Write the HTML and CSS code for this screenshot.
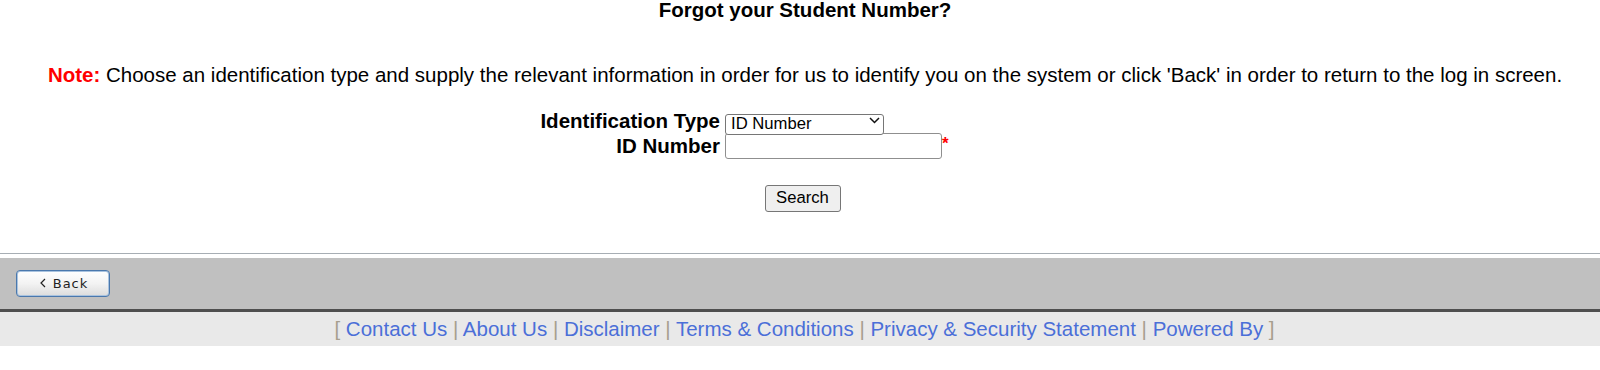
FILE: index.html
```html
<!DOCTYPE html>
<html lang="en">
<head>
<meta charset="utf-8">
<title>Forgot your Student Number?</title>
<link rel="stylesheet" href="styles.css">
</head>
<body>
<div class="main">
  <h1 class="title">Forgot your Student Number?</h1>
  <p class="note"><span class="note-label">Note:</span> Choose an identification type and supply the relevant information in order for us to identify you on the system or click 'Back' in order to return to the log in screen.</p>
  <div class="form-grid">
    <label class="form-label" for="idtype">Identification Type</label>
    <div class="form-field">
      <div class="select-wrap">
        <select id="idtype" class="select">
          <option>ID Number</option>
          <option>Passport Number</option>
        </select>
        <svg class="select-arrow" width="11" height="7" viewBox="0 0 11 7"><polyline points="1,1 5.5,5.5 10,1" fill="none" stroke="#111" stroke-width="1.5"/></svg>
      </div>
    </div>
    <label class="form-label" for="idnum">ID Number</label>
    <div class="form-field">
      <input id="idnum" class="text-input" type="text"><span class="required">*</span>
    </div>
  </div>
  <div class="actions">
    <button class="search-btn" type="button">Search</button>
  </div>
</div>
<div class="divider"></div>
<div class="toolbar">
  <button class="back-btn" type="button">
    <svg class="chev" width="6" height="10" viewBox="0 0 6 10"><polyline points="5,1 1,5 5,9" fill="none" stroke="#222" stroke-width="1.2"/></svg>
    <span class="back-text">Back</span>
  </button>
</div>
<div class="footer">
  <span class="sep">[</span> <a href="#">Contact Us</a> <span class="sep">|</span> <a href="#">About Us</a> <span class="sep">|</span> <a href="#">Disclaimer</a> <span class="sep">|</span> <a href="#">Terms &amp; Conditions</a> <span class="sep">|</span> <a href="#">Privacy &amp; Security Statement</a> <span class="sep">|</span> <a href="#">Powered By</a> <span class="sep">]</span>
</div>
</body>
</html>
```

FILE: styles.css
```css
html, body {
  margin: 0;
  padding: 0;
  background: #ffffff;
}
body {
  font-family: "Liberation Sans", Arial, sans-serif;
  font-size: 20.5px;
  color: #000;
}
.main {
  text-align: center;
  padding-left: 10px;
}
.title {
  margin: 0;
  font-size: 20.5px;
  line-height: 20px;
  font-weight: bold;
}
.note {
  margin: 43px 0 0;
  font-size: 20.5px;
  line-height: 23px;
}
.note-label {
  color: #ff0000;
  font-weight: bold;
}
.form-grid {
  display: grid;
  grid-template-columns: 710px auto;
  grid-template-rows: 21px 26px;
  column-gap: 5px;
  row-gap: 2px;
  align-items: center;
  margin-top: 24px;
  text-align: left;
}
.form-label {
  font-weight: bold;
  font-size: 20.5px;
  line-height: 20px;
  text-align: right;
}
.form-field {
  display: flex;
  align-items: flex-start;
  height: 100%;
}
.select-wrap {
  position: relative;
  width: 159px;
  height: 21px;
}
.select {
  -webkit-appearance: none;
  appearance: none;
  box-sizing: border-box;
  width: 159px;
  height: 21px;
  margin: 0;
  padding: 0 0 2px 5px;
  font-family: Arial, "Liberation Sans", sans-serif;
  font-size: 16.67px;
  line-height: 17px;
  color: #000;
  background: #ffffff;
  border: 1px solid #767676;
  border-radius: 3px;
}
.select-arrow {
  position: absolute;
  right: 4px;
  top: 7px;
  pointer-events: none;
}
.text-input {
  box-sizing: border-box;
  width: 217px;
  height: 26px;
  margin: 0;
  font-family: Arial, "Liberation Sans", sans-serif;
  font-size: 16.67px;
  border: 1px solid #8f8f8f;
  border-radius: 3px;
}
.required {
  color: #ff0000;
  font-size: 17px;
  line-height: 17px;
  margin-top: 2px;
  font-weight: bold;
}
.actions {
  margin-top: 25px;
  padding-right: 5px;
  text-align: center;
}
.search-btn {
  box-sizing: border-box;
  width: 76px;
  height: 27px;
  margin: 0;
  padding: 0;
  font-family: Arial, "Liberation Sans", sans-serif;
  font-size: 16.67px;
  color: #000;
  background: #efefef;
  border: 1px solid #767676;
  border-radius: 3px;
}
.divider {
  margin-top: 41px;
  height: 1px;
  background: #a7aeb4;
}
.toolbar {
  margin-top: 4px;
  height: 51px;
  background: #c0c0c0;
  border-bottom: 3px solid #4f4f4f;
  display: flex;
  align-items: center;
  padding-left: 16px;
}
.back-btn {
  box-sizing: border-box;
  width: 94px;
  height: 27px;
  margin: 0;
  padding: 0 0 0 2px;
  display: flex;
  align-items: center;
  justify-content: center;
  gap: 7px;
  border: 1px solid #4a78ad;
  box-shadow: inset 0 0 0 1px #a9c3df;
  border-radius: 4px;
  background: linear-gradient(#ffffff, #f3f3f3 50%, #dcdcdc);
  font-family: "DejaVu Sans", Verdana, sans-serif;
  font-size: 13px;
  color: #222;
}
.back-text {
  letter-spacing: 1px;
}
.chev {
  display: block;
}
.footer {
  height: 34px;
  line-height: 34px;
  background: #e9e9e9;
  text-align: center;
  font-size: 20.5px;
  padding-left: 9px;
}
.footer a {
  color: #4b6fd8;
  text-decoration: none;
}
.sep {
  color: #a79f8e;
}
```
